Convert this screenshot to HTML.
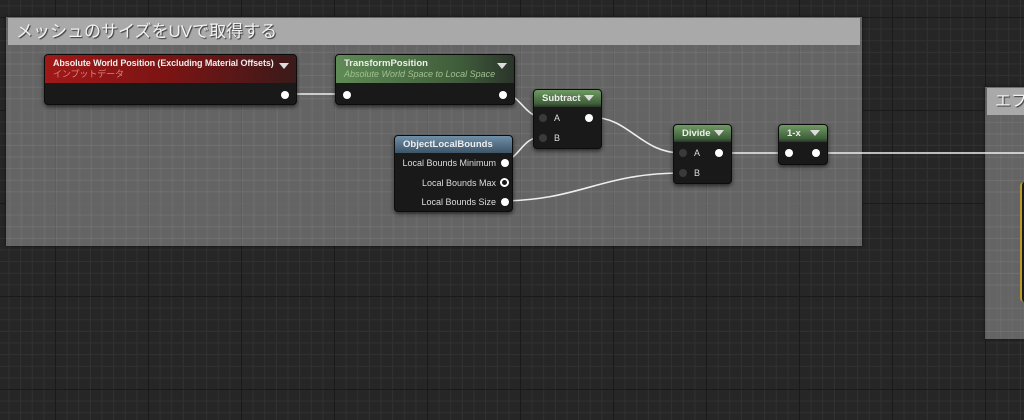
<!DOCTYPE html>
<html><head><meta charset="utf-8"><style>
body{margin:0;width:1024px;height:420px;overflow:hidden;background:#262626;font-family:"Liberation Sans","Noto Sans CJK JP",sans-serif;position:relative}
.grid{position:absolute;inset:0;background-image:
linear-gradient(to right,#1a1a1a 1px,transparent 1px),linear-gradient(to bottom,#1a1a1a 1px,transparent 1px),
linear-gradient(to right,#313131 1px,transparent 1px),linear-gradient(to bottom,#313131 1px,transparent 1px);
background-size:93px 93px,93px 93px,11.625px 11.625px,11.625px 11.625px;background-position:55px 17px,55px 17px,55px 17px,55px 17px}
.cm{position:absolute;background:rgba(145,145,145,0.58);box-shadow:0 0 3px #111}
.cm .grid2{position:absolute;inset:0;background-image:linear-gradient(to right,rgba(255,255,255,.05) 1px,transparent 1px),linear-gradient(to bottom,rgba(255,255,255,.05) 1px,transparent 1px);background-size:11.625px 11.625px;background-position:-8px 0}
.ct{position:absolute;left:2px;top:1px;right:2px;height:27px;background:#a9a9a9;color:#f2f2f2;font-size:17px;line-height:27px;padding-left:8px;text-shadow:1px 1px 1px #333;white-space:nowrap;overflow:hidden}
.n{position:absolute;background:#181918;border:1px solid #0c0c0c;border-radius:4px;box-shadow:0 2px 4px rgba(0,0,0,.6);color:#ddd;font-size:10px}
.h{border-radius:3px 3px 0 0;padding:3px 8px;font-weight:bold;color:#eee;font-size:9.5px;position:relative;white-space:nowrap}
.g{background:linear-gradient(#6f9a63,#3f5f3a 80%,#2a3528)}
.tri{position:absolute;right:7px;top:8px;width:0;height:0;border-left:5px solid transparent;border-right:5px solid transparent;border-top:6px solid #ddd}
.p{position:absolute;width:8px;height:8px;border-radius:50%;background:#fff}
.p.o{background:none;border:2px solid #fff;width:5px;height:5px}
.p.d{background:#3a3a3a}
.l{position:absolute;font-size:9px;color:#ddd;white-space:nowrap}
</style></head><body>
<div class="grid"></div>
<div class="cm" style="left:6px;top:17px;width:856px;height:229px"><div class="grid2"></div><div class="ct">メッシュのサイズをUVで取得する</div></div>
<div class="cm" style="left:985px;top:87px;width:45px;height:252px"><div class="grid2"></div><div class="ct" style="font-size:16px">エフ</div></div>
<div style="position:absolute;left:1020px;top:182px;width:10px;height:120px;background:#1a1a1a;border-left:2px solid #b99a2a;border-radius:4px 0 0 4px"></div>
<svg style="position:absolute;left:0;top:0" width="1024" height="420" fill="none" stroke="#eee" stroke-width="1.6">
<path d="M288 94 C315 94 315 94 343 94"/>
<path d="M504 94 C520 94 525 117 542 117"/>
<path d="M499 162 C520 162 520 137 542 137"/>
<path d="M590 117 C630 117 640 153 682 153"/>
<path d="M499 201 C580 201 600 173 682 173"/>
<path d="M720 153 L787 153"/>
<path d="M817 153 L1024 153"/>
</svg>
<div class="n" style="left:44px;top:54px;width:251px;height:49px">
<div class="h" style="background:linear-gradient(90deg,#a01818,#7a1414 50%,#3a1a1a);height:22px;line-height:11px;font-size:9px;letter-spacing:-0.1px">Absolute World Position (Excluding Material Offsets)<br><span style="font-weight:normal;color:#e08080;font-size:9px">インプットデータ</span><div class="tri"></div></div>
<div class="p" style="left:236px;top:36px"></div></div>
<div class="n" style="left:335px;top:54px;width:178px;height:49px">
<div class="h g" style="height:22px;line-height:11px;background:linear-gradient(90deg,#5f8a55,#3f5c3a 70%,#2b342a)">TransformPosition<br><span style="font-weight:normal;font-style:italic;color:#9fc08f;font-size:9px">Absolute World Space to Local Space</span><div class="tri"></div></div>
<div class="p" style="left:7px;top:36px"></div><div class="p" style="left:163px;top:36px"></div></div>
<div class="n" style="left:533px;top:89px;width:67px;height:58px">
<div class="h g" style="height:11px;line-height:11px">Subtract<div class="tri" style="top:5px"></div></div>
<div class="p d" style="left:5px;top:24px"></div><div class="l" style="left:20px;top:23px">A</div>
<div class="p d" style="left:5px;top:44px"></div><div class="l" style="left:20px;top:43px">B</div>
<div class="p" style="left:51px;top:24px"></div></div>
<div class="n" style="left:394px;top:135px;width:117px;height:75px">
<div class="h" style="height:11px;line-height:11px;background:linear-gradient(#6f8fa8,#3e5568)">ObjectLocalBounds</div>
<div class="l" style="right:16px;top:22px">Local Bounds Minimum</div><div class="p" style="right:3px;top:23px"></div>
<div class="l" style="right:16px;top:42px">Local Bounds Max</div><div class="p o" style="right:3px;top:42px"></div>
<div class="l" style="right:16px;top:61px">Local Bounds Size</div><div class="p" style="right:3px;top:62px"></div></div>
<div class="n" style="left:673px;top:124px;width:57px;height:58px">
<div class="h g" style="height:11px;line-height:11px">Divide<div class="tri" style="top:5px"></div></div>
<div class="p d" style="left:5px;top:24px"></div><div class="l" style="left:20px;top:23px">A</div>
<div class="p d" style="left:5px;top:44px"></div><div class="l" style="left:20px;top:43px">B</div>
<div class="p" style="left:41px;top:24px"></div></div>
<div class="n" style="left:778px;top:124px;width:48px;height:39px">
<div class="h g" style="height:11px;line-height:11px">1-x<div class="tri" style="top:5px"></div></div>
<div class="p" style="left:6px;top:24px"></div><div class="p" style="left:33px;top:24px"></div></div>
</body></html>
